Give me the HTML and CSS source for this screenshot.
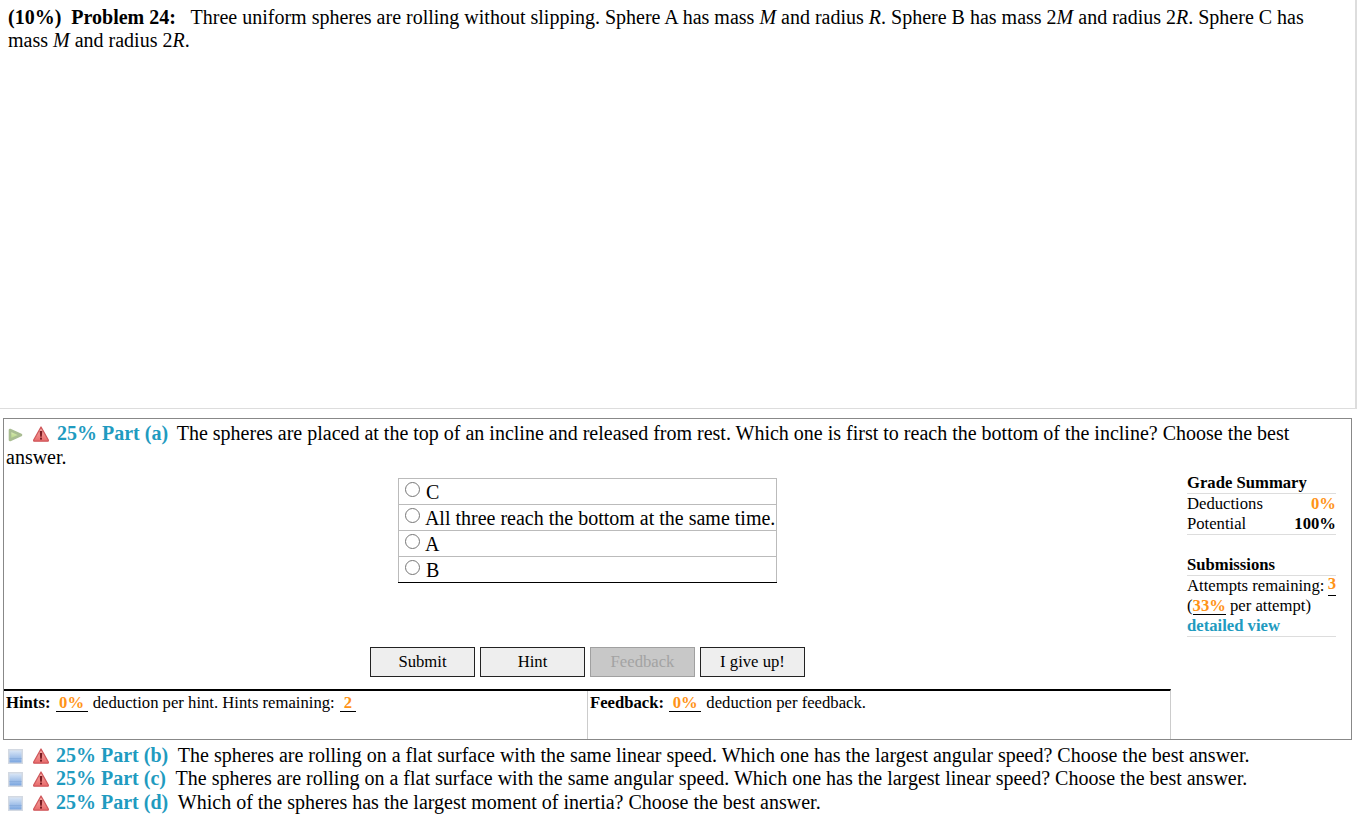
FILE: index.html
```html
<!DOCTYPE html>
<html lang="en">
<head>
    <meta charset="UTF-8">
    <title>Problem 24</title>
    <link rel="stylesheet" href="styles.css">
</head>
<body>

    <svg class="defs" width="0" height="0">
        <defs>
            <linearGradient id="warnFill" x1="0" y1="0" x2="0" y2="1">
                <stop offset="0" stop-color="#f8b4ae"/>
                <stop offset="1" stop-color="#e8696a"/>
            </linearGradient>
            <linearGradient id="playFill" x1="0" y1="0" x2="0" y2="1">
                <stop offset="0" stop-color="#e2efbf"/>
                <stop offset="1" stop-color="#aed27a"/>
            </linearGradient>
            <linearGradient id="boxFill" x1="0" y1="0" x2="0" y2="1">
                <stop offset="0" stop-color="#d9e6f6"/>
                <stop offset="1" stop-color="#7ba6e0"/>
            </linearGradient>
            <symbol id="warn" viewBox="0 0 16 16">
                <path d="M8 1 L15.3 14 Q15.5 15.2 14.6 15.2 L1.4 15.2 Q0.5 15.2 0.7 14 Z" fill="url(#warnFill)" stroke="#d0585c" stroke-width="1.3" stroke-linejoin="round"/>
                <path d="M6.7 5 H9.3 L8.8 10.8 H7.2 Z" fill="#7a1c22"/>
                <rect x="7" y="11.6" width="2" height="2" fill="#7a1c22"/>
            </symbol>
            <symbol id="play" viewBox="0 0 15 14">
                <path d="M2 2 L13 7 L2 12 Z" fill="url(#playFill)" stroke="#a9bd92" stroke-width="2.6" stroke-linejoin="round"/>
            </symbol>
            <symbol id="box" viewBox="0 0 15 15">
                <rect x="0" y="0" width="15" height="15" fill="#d3d9e2"/>
                <rect x="1.5" y="1.5" width="12" height="12" fill="url(#boxFill)"/>
                <rect x="1.5" y="9" width="12" height="1" fill="#8aaede"/>
            </symbol>
        </defs>
    </svg>

    <div class="problem">
        <b class="marks">(10%)</b> <b class="title">Problem 24:</b>
        Three uniform spheres are rolling without slipping. Sphere A has mass <i>M</i> and radius <i>R</i>. Sphere B has mass 2<i>M</i> and radius 2<i>R</i>. Sphere C has mass <i>M</i> and radius 2<i>R</i>.
    </div>

    <div class="part-box">
        <div class="part-head">
            <svg class="icon icon-toggle"><use href="#play"/></svg>
            <svg class="icon icon-warn"><use href="#warn"/></svg>
            <b class="part-label">25% Part (a)</b>
            The spheres are placed at the top of an incline and released from rest. Which one is first to reach the bottom of the incline? Choose the best answer.
        </div>

        <div class="part-body">
            <div class="part-main">
                <table class="choices">
                    <tr><td><input type="radio" name="answer"> C</td></tr>
                    <tr><td><input type="radio" name="answer"> All three reach the bottom at the same time.</td></tr>
                    <tr><td><input type="radio" name="answer"> A</td></tr>
                    <tr><td><input type="radio" name="answer"> B</td></tr>
                </table>

                <div class="buttons">
                    <button>Submit</button>
                    <button>Hint</button>
                    <button class="disabled">Feedback</button>
                    <button>I give up!</button>
                </div>

                <div class="deductions">
                    <div class="hints"><b>Hints:</b> <span class="val">0%</span> deduction per hint. Hints remaining: <span class="val short">2</span></div>
                    <div class="feedback"><b>Feedback:</b> <span class="val">0%</span> deduction per feedback.</div>
                </div>
            </div>

            <div class="summary">
                <div class="sum-title">Grade Summary</div>
                <div class="sum-rows">
                    <div class="sum-row"><span>Deductions</span><b class="orange">0%</b></div>
                    <div class="sum-row"><span>Potential</span><b>100%</b></div>
                </div>
                <div class="sum-title second">Submissions</div>
                <div class="sum-rows">
                    <div class="sum-row"><span>Attempts remaining:</span><b class="orange line">3</b></div>
                    <div>(<b class="orange line">33%</b> per attempt)</div>
                    <div><b class="link">detailed view</b></div>
                </div>
            </div>
        </div>
    </div>

    <div class="other-parts">
        <div class="part-line">
            <svg class="icon icon-toggle"><use href="#box"/></svg>
            <svg class="icon icon-warn"><use href="#warn"/></svg>
            <b class="part-label">25% Part (b)</b>
            The spheres are rolling on a flat surface with the same linear speed. Which one has the largest angular speed? Choose the best answer.
        </div>
        <div class="part-line">
            <svg class="icon icon-toggle"><use href="#box"/></svg>
            <svg class="icon icon-warn"><use href="#warn"/></svg>
            <b class="part-label">25% Part (c)</b>
            The spheres are rolling on a flat surface with the same angular speed. Which one has the largest linear speed? Choose the best answer.
        </div>
        <div class="part-line">
            <svg class="icon icon-toggle"><use href="#box"/></svg>
            <svg class="icon icon-warn"><use href="#warn"/></svg>
            <b class="part-label">25% Part (d)</b>
            Which of the spheres has the largest moment of inertia? Choose the best answer.
        </div>
    </div>

</body>
</html>
```

FILE: styles.css
```css
html, body {
    overflow: hidden;
}

body {
    margin: 0;
    font-family: "Liberation Serif", "Times New Roman", serif;
    font-size: 20px;
    line-height: 23px;
    color: #000;
    background: #fff;
}

.defs {
    display: block;
    height: 0;
}

.problem {
    height: 402px;
    padding: 6px 8px 0 8px;
    border-bottom: 1px solid #ddd;
    border-right: 2px solid #ddd;
    box-sizing: content-box;
    width: 1339px;
}

.title {
    margin: 0 10px 0 5px;
}

.part-box {
    margin: 9px 5px 0 3px;
    height: 322px;
    border: 1px solid #888;
    box-sizing: border-box;
}

.part-head {
    padding: 2px 0 0 2px;
    line-height: 24px;
}

.icon {
    vertical-align: -2px;
}

.icon-toggle {
    width: 15px;
    height: 14px;
    margin-left: 2px;
    margin-right: 5px;
}

.icon-warn {
    width: 16px;
    height: 16px;
    margin-right: 3px;
}

.part-label {
    color: #1f9bc0;
    margin-right: 4px;
}

.part-body {
    display: flex;
    height: 270px;
}

.part-main {
    width: 1167px;
    display: flex;
    flex-direction: column;
    align-items: center;
}

.choices {
    width: 379px;
    margin-top: 9px;
    border-collapse: collapse;
    border-bottom: 1px solid #000;
}

.choices td {
    height: 23px;
    padding: 2px 0 0 0;
    border: 1px solid #bbb;
    line-height: 23px;
    white-space: nowrap;
}

.choices tr:last-child td {
    border-bottom: 1px solid #000;
}

.choices input {
    width: 15px;
    height: 15px;
    margin: 0 1px 0 6px;
    vertical-align: 2px;
}

.buttons {
    display: flex;
    gap: 5px;
    margin-top: 64px;
}

.buttons button {
    width: 105px;
    height: 30px;
    padding: 0;
    font-family: inherit;
    font-size: 16.67px;
    color: #000;
    background: #eee;
    border: 1px solid #222;
}

.buttons .disabled {
    color: #a3a3a3;
    background: #c8c8c8;
    border-color: #a0a0a0;
}

.deductions {
    display: flex;
    width: 100%;
    flex: 1;
    margin-top: 12px;
    border-top: 2.5px solid #000;
    border-right: 1px solid #ccc;
    box-sizing: border-box;
    font-size: 16.67px;
    line-height: 23px;
}

.hints {
    width: 584px;
    padding-left: 2px;
    border-right: 1px solid #ccc;
    box-sizing: border-box;
}

.feedback {
    padding-left: 2px;
}

.val {
    display: inline-block;
    min-width: 32px;
    margin: 0 1px;
    text-align: center;
    font-weight: bold;
    color: #ff9317;
    border-bottom: 1px solid #000;
    line-height: 17px;
}

.val.short {
    min-width: 16px;
}

.summary {
    width: 149px;
    margin: 4px 0 0 16px;
    font-size: 16.67px;
    line-height: 20px;
}

.sum-title {
    font-weight: bold;
    border-bottom: 1px solid #ddd;
    line-height: 20px;
}

.sum-title.second {
    margin-top: 19px;
    line-height: 21px;
}

.sum-rows {
    border-bottom: 1px solid #ddd;
}

.sum-row {
    display: flex;
    justify-content: space-between;
}

.orange {
    color: #ff9317;
}

.line {
    border-bottom: 1px solid #000;
    line-height: 16px;
    display: inline-block;
}

.link {
    color: #1f9bc0;
}

.other-parts {
    margin-top: 4px;
    padding-left: 4px;
}

.part-line {
    line-height: 23.4px;
    white-space: nowrap;
}

.part-line .icon-toggle {
    width: 15px;
    height: 15px;
    margin-left: 4px;
}

.part-line .icon-warn {
    margin-right: 2px;
}

.part-line .part-label {
    margin-right: 5px;
}
```
